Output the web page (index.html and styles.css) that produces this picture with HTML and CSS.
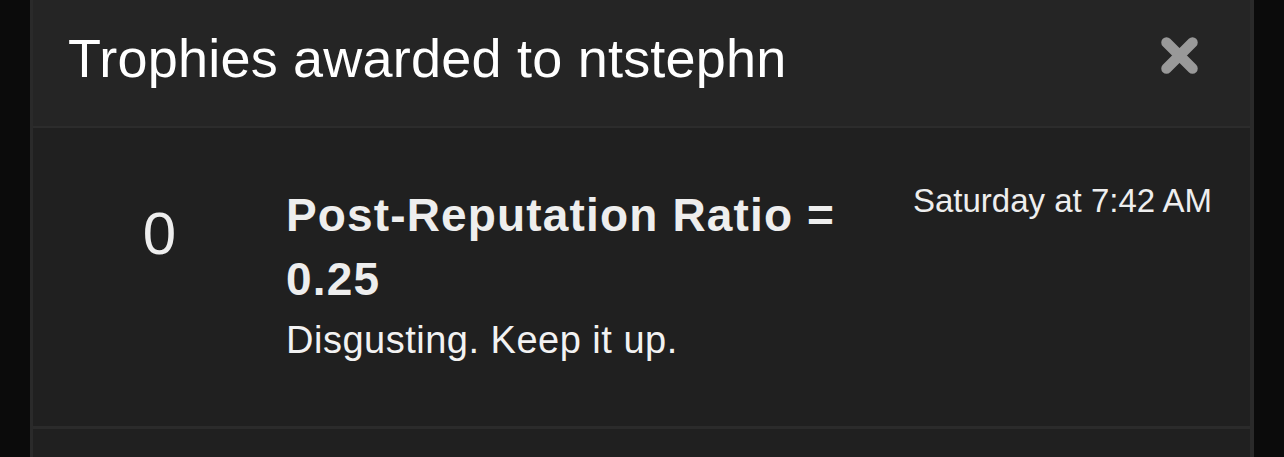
FILE: index.html
```html
<!DOCTYPE html>
<html lang="en">
<head>
<meta charset="utf-8">
<title>Trophies</title>
<link rel="stylesheet" href="styles.css">
</head>
<body>
<div class="overlay">
  <div class="dialog">
    <div class="dialog-header">
      <h2 class="dialog-title">Trophies awarded to ntstephn</h2>
      <button class="close" aria-label="Close">
        <svg width="37" height="37" viewBox="0 0 37 37"><path d="M5.5 5.5L31.5 31.5M31.5 5.5L5.5 31.5" stroke="#999999" stroke-width="10.5" stroke-linecap="round" fill="none"/></svg>
      </button>
    </div>
    <ul class="trophy-list">
      <li class="trophy">
        <div class="trophy-points">0</div>
        <div class="trophy-content">
          <h3 class="trophy-title">Post-Reputation Ratio = 0.25</h3>
          <div class="trophy-desc">Disgusting. Keep it up.</div>
        </div>
        <div class="trophy-date">Saturday at 7:42 AM</div>
      </li>
      <li class="trophy trophy-next"></li>
    </ul>
  </div>
</div>
</body>
</html>
```
FILE: styles.css
```css
* { box-sizing: border-box; }
html, body {
  margin: 0;
  padding: 0;
  height: 100%;
  background: #0b0b0b;
  overflow: hidden;
}
body {
  font-family: "Liberation Sans", Arial, Helvetica, sans-serif;
  color: #eeeeee;
}
.overlay {
  padding: 0 30px;
  height: 100%;
}
.dialog {
  height: 100%;
  overflow: hidden;
  background: #212121;
  border-left: 3px solid #2a2a2a;
  border-right: 4px solid #2a2a2a;
}
.dialog-header {
  height: 128px;
  background: #252525;
  border-bottom: 2px solid #2c2c2c;
  display: flex;
  align-items: flex-start;
  justify-content: space-between;
  padding: 26px 52px 0 35px;
}
.dialog-title {
  margin: 0;
  font-size: 54px;
  line-height: 64px;
  font-weight: normal;
  letter-spacing: 0.22px;
  color: #ffffff;
}
.close {
  margin-top: 11px;
  padding: 0;
  border: 0;
  background: none;
  width: 37px;
  height: 37px;
  display: block;
}
.close svg { display: block; }
.trophy-list {
  list-style: none;
  margin: 0;
  padding: 0;
}
.trophy {
  display: flex;
  align-items: flex-start;
  height: 301px;
  padding: 53px 38px 0 0;
  border-bottom: 3px solid #2b2b2b;
  background: #202020;
}
.trophy-points {
  width: 253px;
  flex: none;
  text-align: center;
  font-size: 60px;
  line-height: 60px;
  margin-top: 23px;
  color: #eeeeee;
}
.trophy-content {
  flex: 1;
  min-width: 0;
  padding-right: 40px;
}
.trophy-title {
  margin: 2px 0 0;
  font-size: 46px;
  line-height: 64px;
  font-weight: bold;
  letter-spacing: 1.15px;
  color: #eeeeee;
}
.trophy-desc {
  margin-top: 7px;
  font-size: 38px;
  line-height: 44px;
  letter-spacing: 0.5px;
  color: #f2f2f2;
}
.trophy-date {
  flex: none;
  font-size: 33px;
  line-height: 40px;
  color: #eeeeee;
}
.trophy-next {
  height: 60px;
  border-bottom: 0;
}
```
